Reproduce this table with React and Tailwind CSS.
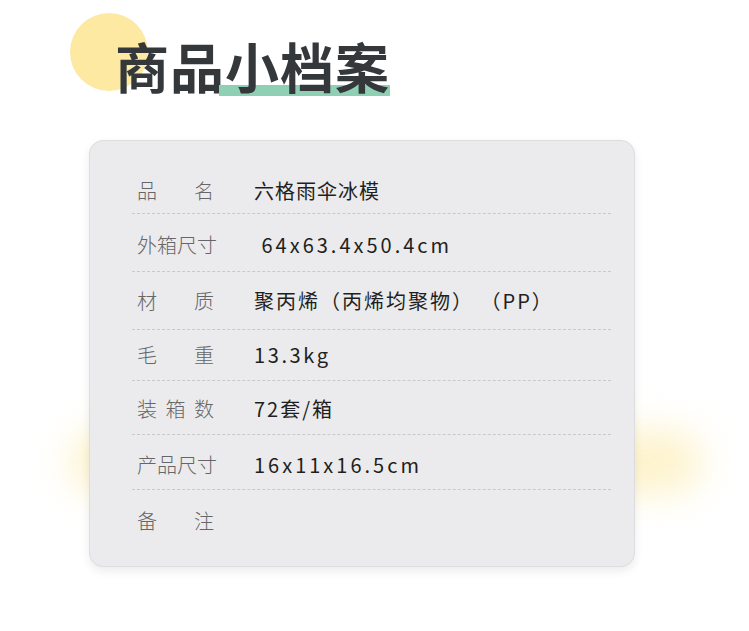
const rows = [
  { label: ["品", "名"], value: "六格雨伞冰模", cls: "h-[58px] pt-[12px]", track: "tracking-[1px]" },
  { label: ["外", "箱", "尺", "寸"], value: "\u00a064x63.4x50.4cm", cls: "h-[58px] pt-[4px]", track: "tracking-[3px]" },
  { label: ["材", "质"], value: "聚丙烯（丙烯均聚物） （PP）", cls: "h-[58px] pt-0", track: "tracking-[2px]" },
  { label: ["毛", "重"], value: "13.3kg", cls: "h-[51px] pt-0", track: "tracking-[2.6px]" },
  { label: ["装", "箱", "数"], value: "72套/箱", cls: "h-[54px] pt-[2px]", track: "tracking-[2px]" },
  { label: ["产", "品", "尺", "寸"], value: "16x11x16.5cm", cls: "h-[55px] pt-[5px]", track: "tracking-[3px]" },
  { label: ["备", "注"], value: "", cls: "h-[62px] pt-0", last: true },
];

export default function App() {
  return (
    <div
      className="relative w-[749px] h-[631px] bg-white overflow-hidden"
      style={{ fontFamily: '"Noto Sans CJK SC", "Noto Sans", sans-serif' }}
    >
      {/* soft glow behind the card */}
      <div className="absolute left-[70px] top-[430px] w-[632px] h-[64px] rounded-full bg-[#fdf0c0] opacity-80 blur-[18px]" />

      {/* heading */}
      <div className="relative pt-[13px] pl-[70px]">
        <div className="absolute left-[70px] top-[13px] w-[78px] h-[78px] rounded-full bg-[#fde9a2]" />
        <h1 className="relative pl-[45px] pt-[26px] text-[54px] leading-none font-bold text-[#34383b] tracking-[1px]">
          商品
          <span className="inline-block -ml-[6px] pl-[6px] pb-[3px] bg-[linear-gradient(#8fcfb3,#8fcfb3)] bg-no-repeat bg-bottom bg-[length:100%_11px]">
            小档案
          </span>
        </h1>
      </div>

      {/* card */}
      <div className="relative ml-[89px] mt-[44px] w-[546px] h-[427px] rounded-[14px] border border-[#dddddf] bg-[#ebebed] shadow-[0_4px_10px_rgba(0,0,0,0.08)] pt-[15px] pl-[42px] pr-[23px]">
        {rows.map((r, i) => (
          <div
            key={i}
            className={`flex items-center pl-[5px] ${r.cls} ${
              r.last ? "" : "border-b border-dashed border-[#c9c9cb]"
            }`}
          >
            <div className="flex justify-between w-[77px] text-[20px] font-light text-[#666668]">
              {r.label.map((c, j) => (
                <span key={j}>{c}</span>
              ))}
            </div>
            <div className={`ml-[40px] text-[20px] text-[#1f1f21] whitespace-pre ${r.track || ""}`}>
              {r.value}
            </div>
          </div>
        ))}
      </div>
    </div>
  );
}
